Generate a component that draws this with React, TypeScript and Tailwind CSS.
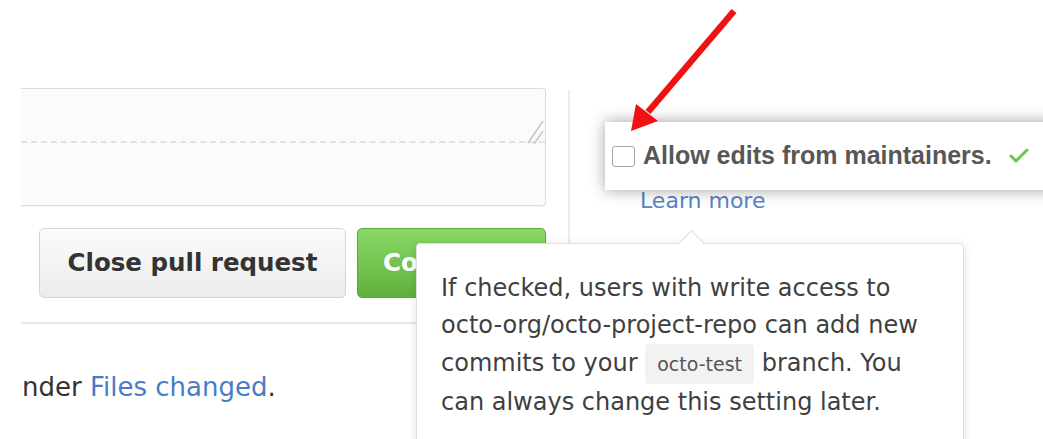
import { Check } from "lucide-react";

const sans = "font-['Liberation_Sans','Helvetica_Neue',Arial,sans-serif]";
const wide = "font-['DejaVu_Sans','Liberation_Sans',sans-serif]";

function CommentBox() {
  return (
    <div className="mt-[88px] h-[118px] w-[525px] rounded-r-[4px] border-r border-b border-t border-[#dcdcdc] bg-[#fbfbfb] shadow-[0_1px_1px_rgba(0,0,0,0.06)]">
      <div className="relative h-[54px] border-b-2 border-dashed border-[#e2e2e2]">
        {/* resize grip */}
        <svg className="absolute right-[1px] bottom-[-4px]" width="18" height="28" viewBox="0 0 18 28">
          <path d="M2 26 L17 4 M8 27 L17 14" stroke="#c9c9c9" strokeWidth="1.6" fill="none" />
        </svg>
      </div>
    </div>
  );
}

function Actions() {
  return (
    <div className="mt-[22px] flex h-[70px] gap-[11px] pl-[18px]">
      <button className={`${wide} flex h-full w-[307px] items-center justify-center rounded-[5px] border border-[#d6d6d6] bg-gradient-to-b from-[#fbfbfb] to-[#ececec] text-[24.5px] font-bold text-[#333]`}>
        Close pull request
      </button>
      <button className={`${wide} flex h-full w-[189px] items-center rounded-[5px] border border-[#5aa83c] bg-gradient-to-b from-[#8bd867] to-[#5eb13c] pl-[25px] text-[24.5px] font-bold text-white`}>
        Comment
      </button>
    </div>
  );
}

function MaintainerCallout() {
  return (
    <div className="absolute top-[122px] left-[605px] flex h-[68px] w-[480px] items-center bg-white pl-[7px] shadow-[0_0_14px_rgba(0,0,0,0.38)]">
      <span className="h-[21px] w-[23px] rounded-[3px] border-[1.5px] border-[#a5a5a5] bg-white" />
      <span className="ml-[8px] text-[25px] font-bold text-[#575757]">
        Allow edits from maintainers.
      </span>
      <Check className="ml-[15px] text-[#6cc644]" size={24} strokeWidth={3} />
    </div>
  );
}

function Tooltip() {
  return (
    <div className="absolute top-[243px] left-[416px] h-[220px] w-[548px] rounded-[4px] border border-[#dedede] bg-white pt-[26px] pl-[24px] shadow-[0_2px_10px_rgba(0,0,0,0.12)]">
      <span className="absolute top-[-10px] left-[265px] h-[19px] w-[19px] rotate-45 border-t border-l border-[#dedede] bg-white" />
      <p className={`${wide} text-[24px] leading-[37px] text-[#3f3f3f]`}>
        If checked, users with write access to
        <br />
        octo-org/octo-project-repo can add new
        <br />
        commits to your{" "}
        <code className={`${wide} inline-block rounded-[4px] bg-[#f2f2f2] px-[12px] text-[19px] leading-[40px] text-[#555]`}>
          octo-test
        </code>{" "}
        branch. You
        <br />
        can always change this setting later.
      </p>
    </div>
  );
}

function PointerArrow() {
  return (
    <svg className="absolute top-0 left-0" width="1043" height="439" viewBox="0 0 1043 439">
      <line x1="734" y1="11" x2="648" y2="112" stroke="#f01212" strokeWidth="6.5" strokeLinecap="butt" />
      <polygon points="631,131 636,104 658,121" fill="#f01212" />
    </svg>
  );
}

export default function App() {
  return (
    <div className={`${sans} relative h-[439px] w-[1043px] overflow-hidden bg-white`}>
      <div className="flex h-full">
        <div className="ml-[21px] w-[547px] overflow-hidden">
          <CommentBox />
          <Actions />
          <div className="mt-[24px] w-[420px] border-t-2 border-[#e8e8e8]" />
          <p className={`${wide} ml-[1px] mt-[44px] text-[26px] text-[#333]`}>
            nder <span className="text-[#4a7cc6]">Files changed</span>.
          </p>
        </div>
        <div className="mt-[90px] flex-1 border-l-2 border-[#ececec]">
          <a className={`${wide} mt-[94px] ml-[70px] block text-[22px] text-[#5a82c6]`}>Learn more</a>
        </div>
      </div>
      <MaintainerCallout />
      <Tooltip />
      <PointerArrow />
    </div>
  );
}
